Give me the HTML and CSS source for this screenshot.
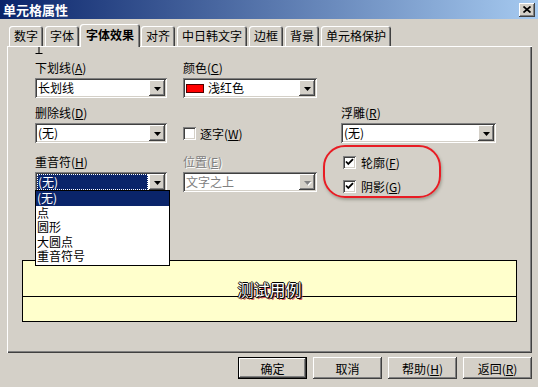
FILE: index.html
```html
<!DOCTYPE html>
<html lang="zh-CN">
<head>
<meta charset="utf-8">
<title>单元格属性</title>
<link rel="stylesheet" href="styles.css">
</head>
<body>
<div class="titlebar">
  <span class="title">单元格属性</span>
  <span class="close"><svg width="8" height="7" viewBox="0 0 8 7"><path d="M0.5 0.5L7.5 6.5M7.5 0.5L0.5 6.5" stroke="#000" stroke-width="1.7"/></svg></span>
</div>

<div class="tabs">
  <div class="tab">数字</div>
  <div class="tab">字体</div>
  <div class="tab active">字体效果</div>
  <div class="tab">对齐</div>
  <div class="tab">中日韩文字</div>
  <div class="tab">边框</div>
  <div class="tab">背景</div>
  <div class="tab">单元格保护</div>
</div>

<div class="panel">
  <div class="form">
    <div class="field">
      <span class="lbl">下划线(<u>A</u>)</span>
      <div class="combo"><span class="value">长划线</span><span class="drop"><svg width="7" height="4" viewBox="0 0 7 4"><path d="M0 0h7L3.5 4z" fill="#000"/></svg></span></div>
    </div>
    <div class="field">
      <span class="lbl">颜色(<u>C</u>)</span>
      <div class="combo"><span class="value"><span class="swatch"></span>浅红色</span><span class="drop"><svg width="7" height="4" viewBox="0 0 7 4"><path d="M0 0h7L3.5 4z" fill="#000"/></svg></span></div>
    </div>
    <div class="field col3"></div>

    <div class="field">
      <span class="lbl">删除线(<u>D</u>)</span>
      <div class="combo"><span class="value">(无)</span><span class="drop"><svg width="7" height="4" viewBox="0 0 7 4"><path d="M0 0h7L3.5 4z" fill="#000"/></svg></span></div>
    </div>
    <div class="field bottom">
      <div class="check"><span class="box"></span><span>逐字(<u>W</u>)</span></div>
    </div>
    <div class="field col3">
      <span class="lbl">浮雕(<u>R</u>)</span>
      <div class="combo"><span class="value">(无)</span><span class="drop"><svg width="7" height="4" viewBox="0 0 7 4"><path d="M0 0h7L3.5 4z" fill="#000"/></svg></span></div>
    </div>

    <div class="field r3">
      <span class="lbl">重音符(<u>H</u>)</span>
      <div class="combo open"><span class="value focused">(无)</span><span class="drop"><svg width="7" height="4" viewBox="0 0 7 4"><path d="M0 0h7L3.5 4z" fill="#000"/></svg></span>
        <ul class="list">
          <li class="sel">(无)</li>
          <li>点</li>
          <li>圆形</li>
          <li>大圆点</li>
          <li>重音符号</li>
        </ul>
      </div>
    </div>
    <div class="field r3">
      <span class="lbl disabled">位置(<u>E</u>)</span>
      <div class="combo dis"><span class="value">文字之上</span><span class="drop"><svg width="7" height="4" viewBox="0 0 7 4"><path d="M0 0h7L3.5 4z" fill="#808080"/></svg></span></div>
    </div>
    <div class="field r3 col3 checks">
      <div class="check"><span class="box"><svg width="9" height="8" viewBox="0 0 9 8"><polyline points="1,3.5 3.3,6 8,1.2" fill="none" stroke="#000" stroke-width="1.8"/></svg></span><span>轮廓(<u>F</u>)</span></div>
      <div class="check"><span class="box"><svg width="9" height="8" viewBox="0 0 9 8"><polyline points="1,3.5 3.3,6 8,1.2" fill="none" stroke="#000" stroke-width="1.8"/></svg></span><span>阴影(<u>G</u>)</span></div>
    </div>
  </div>

  <div class="preview">
    <div class="preview-top"><span class="sample">测试用例</span></div>
    <div class="preview-bottom"></div>
  </div>

  <div class="annotation"></div>
</div>

<div class="buttons">
  <div class="btn default">确定</div>
  <div class="btn">取消</div>
  <div class="btn">帮助(<u>H</u>)</div>
  <div class="btn">返回(<u>R</u>)</div>
</div>

<svg class="ibeam" width="8" height="17" viewBox="0 0 8 17"><path d="M0.5 0.5H7.5M4 1V16M0.5 16.5H7.5" stroke="#000" fill="none"/></svg>
</body>
</html>
```

FILE: styles.css
```css
* { box-sizing: border-box; margin: 0; padding: 0; }

html, body { width: 538px; height: 387px; overflow: hidden; }

body {
  position: relative;
  background: #d4d0c8;
  font-family: "Noto Sans CJK SC", "Liberation Sans", sans-serif;
  font-size: 12px;
  color: #000;
}

u { text-decoration: underline; text-underline-offset: 1px; }

/* title bar */
.titlebar {
  height: 19px;
  background: linear-gradient(to right, #0a246a, #a6caf0);
  display: flex;
  align-items: center;
  justify-content: space-between;
  padding: 0 3px 0 3px;
}
.title { color: #fff; font-weight: bold; font-size: 13px; line-height: 19px; }
.close {
  width: 16px; height: 14px;
  background: #d4d0c8;
  box-shadow: inset -1px -1px #404040, inset 1px 1px #fff, inset -2px -2px #808080;
  display: flex; align-items: center; justify-content: center;
}

/* tabs */
.tabs {
  position: relative;
  z-index: 2;
  display: flex;
  align-items: flex-start;
  gap: 2px;
  height: 22px;
  margin-top: 5px;
  padding-left: 9px;
}
.tab {
  margin-top: 2px;
  height: 20px;
  padding: 0 5px;
  line-height: 19px;
  background: #d4d0c8;
  border-radius: 3px 3px 0 0;
  box-shadow: inset 1px 1px #fff, inset -1px 0 #404040, inset -2px 0 #808080;
}
.tab.active {
  margin: 0 -1px;
  height: 23px;
  padding: 0 6px;
  line-height: 21px;
  font-weight: bold;
}

/* panel */
.panel {
  position: relative;
  z-index: 1;
  margin-left: 7px;
  width: 525px;
  height: 307px;
  padding: 15px 14px 0 15px;
  box-shadow: inset 1px 1px #fff, inset -1px -1px #404040, inset -2px -2px #808080;
}

.form {
  margin-left: 13px;
  display: grid;
  grid-template-columns: 132px 134px 163px;
  column-gap: 16px;
  row-gap: 8px;
}
.field { display: flex; flex-direction: column; gap: 3px; }
.field.col3 { margin-left: 8px; }
.field.r3 { margin-top: 4px; }
.field.bottom { justify-content: flex-end; }

.lbl { height: 14px; line-height: 14px; white-space: nowrap; }
.lbl.disabled { color: #808080; text-shadow: 1px 1px 0 #fff; }

.combo {
  position: relative;
  display: flex;
  height: 20px;
  padding: 2px;
  background: #fff;
  box-shadow: inset 1px 1px #808080, inset -1px -1px #fff, inset 2px 2px #404040, inset -2px -2px #d4d0c8;
}
.value {
  flex: 1;
  display: flex;
  align-items: center;
  line-height: 16px;
  padding-left: 1px;
  white-space: nowrap;
}
.value.focused {
  margin-right: 1px;
  background: #0a246a;
  color: #fff;
  outline: 1px dotted #fff;
  outline-offset: -1px;
}
.combo.dis .value { color: #808080; }
.swatch {
  width: 18px; height: 9px;
  margin-right: 4px;
  background: #ff0000;
  border: 1px solid #500000;
}
.drop {
  width: 16px; height: 16px;
  background: #d4d0c8;
  box-shadow: inset -1px -1px #404040, inset 1px 1px #fff, inset -2px -2px #808080;
  display: flex; align-items: center; justify-content: center;
  padding-top: 1px;
}
.combo.dis .drop svg { filter: drop-shadow(1px 1px 0 #fff); }

.list {
  position: absolute;
  top: 18px;
  left: 0;
  width: 135px;
  list-style: none;
  background: #fff;
  border: 1px solid #000;
  padding-bottom: 1px;
  z-index: 3;
}
.list li {
  height: 14.6px;
  line-height: 14.6px;
  padding-left: 1px;
}
.list li.sel { background: #0a246a; color: #fff; }

.check { display: flex; align-items: center; gap: 4px; height: 20px; white-space: nowrap; }
.box {
  width: 13px; height: 13px;
  background: #fff;
  box-shadow: inset 1px 1px #808080, inset -1px -1px #fff, inset 2px 2px #404040, inset -2px -2px #d4d0c8;
  display: flex; align-items: center; justify-content: center;
}
.checks { margin-top: 2px; padding-left: 2px; gap: 10px; }
.checks .check { height: 14px; gap: 5px; }

/* preview */
.preview {
  margin-top: 67px;
  width: 495px;
  height: 62px;
  background: #ffffcc;
  border: 1px solid #000;
  display: flex;
  flex-direction: column;
}
.preview-top {
  height: 36px;
  border-bottom: 1px solid #000;
  padding-top: 20px;
  display: flex;
  justify-content: center;
}
.sample {
  font-size: 16px;
  line-height: 16px;
  height: 16px;
  color: #fff;
  text-shadow: -1px 0 0 #000, 1px 0 0 #000, 0 -1px 0 #000, 0 1px 0 #000, 1px 1px 0 #000, 2px 2px 0 #e0505c;
}

/* red annotation */
.annotation {
  position: absolute;
  left: 316px;
  top: 99px;
  width: 118px;
  height: 53px;
  border: 2px solid #e81c24;
  border-radius: 22px;
  box-shadow: 1px 2px 3px rgba(60, 70, 50, 0.35);
}

/* buttons */
.buttons {
  display: flex;
  justify-content: flex-end;
  gap: 6px;
  margin-top: 4px;
  padding-right: 6px;
}
.btn {
  width: 69px;
  height: 22px;
  display: flex; align-items: center; justify-content: center;
  background: #d4d0c8;
  box-shadow: inset -1px -1px #404040, inset 1px 1px #fff, inset -2px -2px #808080;
}
.btn.default {
  box-shadow: inset 0 0 0 1px #000, inset -2px -2px #404040, inset 2px 2px #fff, inset -3px -3px #808080;
}

.ibeam { position: absolute; left: 35px; top: 37px; }
```
